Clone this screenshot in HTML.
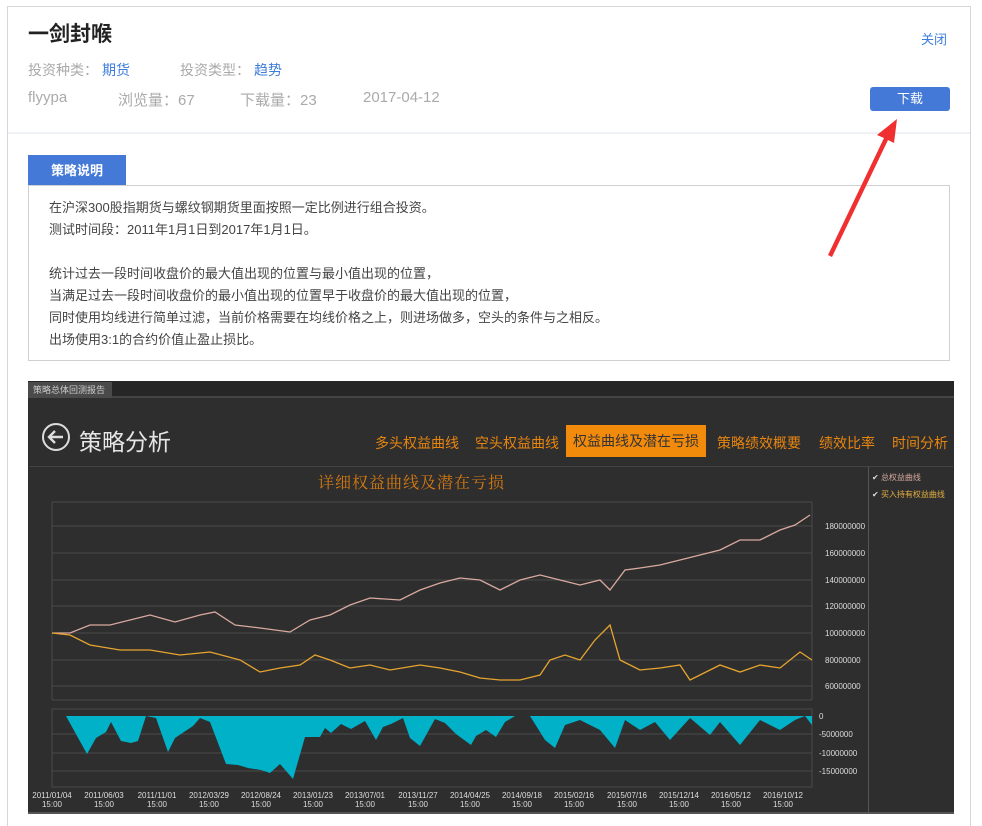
<!DOCTYPE html>
<html style="width:982px;height:826px;overflow:hidden"><head><meta charset="utf-8"><style>
*{margin:0;padding:0;box-sizing:border-box}
body{width:982px;height:826px;background:#fff;font-family:"Liberation Sans","Noto Sans CJK SC",sans-serif;position:relative;overflow:hidden}
.a{position:absolute;white-space:nowrap}
.g{color:#aaa;font-size:14px}
.b{color:#3d7ddb;font-size:14px}
</style></head><body>
<div class="a" style="left:7px;top:6px;width:964px;height:820px;border:1px solid #d6d6d6;border-bottom:none"></div>
<div class="a" style="left:8px;top:132px;width:962px;height:2px;background:#eef1f5"></div>
<div class="a" style="left:28px;top:18px;font-size:21px;font-weight:bold;color:#222">一剑封喉</div>
<div class="a" style="left:921px;top:29px;font-size:13px;color:#3d7ddb">关闭</div>
<div class="a g" style="left:28px;top:60px">投资种类：</div><div class="a b" style="left:102px;top:60px">期货</div>
<div class="a g" style="left:180px;top:60px">投资类型：</div><div class="a b" style="left:254px;top:60px">趋势</div>
<div class="a" style="left:28px;top:89px;font-size:15px;color:#aaa">flyypa</div>
<div class="a" style="left:118px;top:89px;font-size:15px;color:#aaa">浏览量：67</div>
<div class="a" style="left:240px;top:89px;font-size:15px;color:#aaa">下载量：23</div>
<div class="a" style="left:363px;top:89px;font-size:15px;color:#aaa">2017-04-12</div>
<div class="a" style="left:870px;top:87px;width:80px;height:24px;background:#4479d8;border-radius:3px;color:#fff;font-size:13px;text-align:center;line-height:24px">下载</div>
<div class="a" style="left:28px;top:155px;width:98px;height:30px;background:#4479d8;color:#fff;font-size:13px;font-weight:bold;text-align:center;line-height:32px">策略说明</div>
<div class="a" style="left:28px;top:185px;width:922px;height:176px;border:1px solid #d0d0d0;font-size:13px;color:#444;line-height:22px;padding:11px 0 0 20px">在沪深300股指期货与螺纹钢期货里面按照一定比例进行组合投资。<br>测试时间段：2011年1月1日到2017年1月1日。<br><br>统计过去一段时间收盘价的最大值出现的位置与最小值出现的位置，<br>当满足过去一段时间收盘价的最小值出现的位置早于收盘价的最大值出现的位置，<br>同时使用均线进行简单过滤，当前价格需要在均线价格之上，则进场做多，空头的条件与之相反。<br>出场使用3:1的合约价值止盈止损比。</div>
<svg class="a" style="left:0;top:0" width="982" height="826">
<polygon points="828,255 884,138 877,135 897,119 894,143 888,140 832,257" fill="#f03030"/>
</svg>
<div class="a" style="left:28px;top:381px;width:926px;height:433px;background:#2e2e2e;border-bottom:2px solid #555"></div>
<div class="a" style="left:28px;top:381px;width:926px;height:17px;background:#262626;border-bottom:2px solid #444"></div>
<div class="a" style="left:28px;top:382px;width:84px;height:16px;background:#4a4a4a;color:#ccc;font-size:9px;line-height:16px;padding-left:5px">策略总体回测报告</div>
<svg class="a" style="left:41px;top:422px" width="32" height="32"><circle cx="15" cy="15" r="13" fill="none" stroke="#ddd" stroke-width="2"/><path d="M22 15H9M14 9l-6 6 6 6" fill="none" stroke="#ddd" stroke-width="2.4"/></svg>
<div class="a" style="left:79px;top:423px;font-size:23px;color:#e6e6e6">策略分析</div>
<div class="a" style="left:375px;top:433px;font-size:14px;color:#e8850f">多头权益曲线</div>
<div class="a" style="left:475px;top:433px;font-size:14px;color:#e8850f">空头权益曲线</div>
<div class="a" style="left:566px;top:425px;width:140px;height:32px;background:#f28a0c;color:#333;font-size:14px;text-align:center;line-height:32px">权益曲线及潜在亏损</div>
<div class="a" style="left:717px;top:433px;font-size:14px;color:#e8850f">策略绩效概要</div>
<div class="a" style="left:819px;top:433px;font-size:14px;color:#e8850f">绩效比率</div>
<div class="a" style="left:892px;top:433px;font-size:14px;color:#e8850f">时间分析</div>
<div class="a" style="left:29px;top:466px;width:924px;height:1px;background:#444"></div>
<div class="a" style="left:868px;top:467px;width:1px;height:346px;background:#555"></div>
<div class="a" style="left:318px;top:470px;font-size:16px;color:#d67a10;letter-spacing:1px;font-family:'Noto Serif CJK SC',serif">详细权益曲线及潜在亏损</div>
<div class="a" style="left:872px;top:472px;font-size:8px;color:#ddd">✔ <span style="color:#d9a9a0">总权益曲线</span></div>
<div class="a" style="left:872px;top:489px;font-size:8px;color:#ddd">✔ <span style="color:#e6b040">买入持有权益曲线</span></div>
<svg class="a" style="left:0;top:0" width="982" height="826" font-family="Liberation Sans" font-size="8" fill="#ddd">
<g stroke="#4a4a4a" stroke-width="1">
<line x1="52" y1="502" x2="812" y2="502"/><line x1="52" y1="526" x2="812" y2="526"/><line x1="52" y1="553" x2="812" y2="553"/><line x1="52" y1="580" x2="812" y2="580"/><line x1="52" y1="606" x2="812" y2="606"/><line x1="52" y1="633" x2="812" y2="633"/><line x1="52" y1="660" x2="812" y2="660"/><line x1="52" y1="686" x2="812" y2="686"/>
<line x1="52" y1="502" x2="52" y2="700"/><line x1="812" y1="502" x2="812" y2="700"/><line x1="52" y1="700" x2="812" y2="700"/>
<line x1="52" y1="709" x2="812" y2="709"/><line x1="52" y1="734" x2="812" y2="734"/><line x1="52" y1="753" x2="812" y2="753"/><line x1="52" y1="771" x2="812" y2="771"/><line x1="52" y1="787" x2="812" y2="787"/>
<line x1="52" y1="709" x2="52" y2="787"/><line x1="812" y1="709" x2="812" y2="787"/>
</g>
<polygon fill="#00b1c8" points="52,716 66,716 87,754 96,738 106,732 111,722 121,741 131,743 138,741 146,716 156,718 168,752 175,738 193,726 200,718 210,722 226,764 238,765 248,768 261,770 270,773 280,764 293,779 305,737 320,737 325,728 331,733 341,724 351,729 365,721 376,740 383,727 391,724 403,718 410,738 420,746 435,719 445,723 456,734 471,745 476,736 486,730 496,737 505,722 515,716 530,716 545,740 555,748 565,725 580,720 600,730 615,748 625,720 640,730 655,722 670,740 690,718 710,735 720,722 740,745 760,720 780,730 795,720 805,716 812,725 812,716"/>
<polyline fill="none" stroke="#d9a9a0" stroke-width="1.3" points="52,633 70,633 90,625 110,625 130,620 150,615 175,622 200,615 215,612 235,625 260,628 290,632 310,620 330,615 350,605 370,598 400,600 420,590 440,583 460,578 480,580 500,590 520,580 540,575 560,580 580,585 600,580 610,590 625,570 640,568 660,565 680,560 700,555 720,550 740,540 760,540 780,530 795,525 810,515"/>
<polyline fill="none" stroke="#e6a52e" stroke-width="1.3" points="52,633 70,635 90,645 120,650 150,650 180,655 210,652 240,660 260,672 280,668 300,665 315,655 330,660 350,668 370,665 390,670 420,665 440,668 460,672 480,678 500,680 520,680 540,675 550,660 565,655 580,660 595,640 610,625 620,660 640,670 660,668 680,665 690,680 700,675 720,665 740,672 760,665 780,668 800,652 812,660"/>
<g>
<text x="825" y="529">180000000</text><text x="825" y="556">160000000</text><text x="825" y="583">140000000</text><text x="825" y="609">120000000</text><text x="825" y="636">100000000</text><text x="825" y="663">80000000</text><text x="825" y="689">60000000</text>
<text x="819" y="719">0</text><text x="819" y="737">-5000000</text><text x="819" y="756">-10000000</text><text x="819" y="774">-15000000</text>
</g>
<g text-anchor="middle">
<text x="52" y="798">2011/01/04</text><text x="52" y="807">15:00</text>
<text x="104" y="798">2011/06/03</text><text x="104" y="807">15:00</text>
<text x="157" y="798">2011/11/01</text><text x="157" y="807">15:00</text>
<text x="209" y="798">2012/03/29</text><text x="209" y="807">15:00</text>
<text x="261" y="798">2012/08/24</text><text x="261" y="807">15:00</text>
<text x="313" y="798">2013/01/23</text><text x="313" y="807">15:00</text>
<text x="365" y="798">2013/07/01</text><text x="365" y="807">15:00</text>
<text x="418" y="798">2013/11/27</text><text x="418" y="807">15:00</text>
<text x="470" y="798">2014/04/25</text><text x="470" y="807">15:00</text>
<text x="522" y="798">2014/09/18</text><text x="522" y="807">15:00</text>
<text x="574" y="798">2015/02/16</text><text x="574" y="807">15:00</text>
<text x="627" y="798">2015/07/16</text><text x="627" y="807">15:00</text>
<text x="679" y="798">2015/12/14</text><text x="679" y="807">15:00</text>
<text x="731" y="798">2016/05/12</text><text x="731" y="807">15:00</text>
<text x="783" y="798">2016/10/12</text><text x="783" y="807">15:00</text>
</g>
</svg>
</body></html>
